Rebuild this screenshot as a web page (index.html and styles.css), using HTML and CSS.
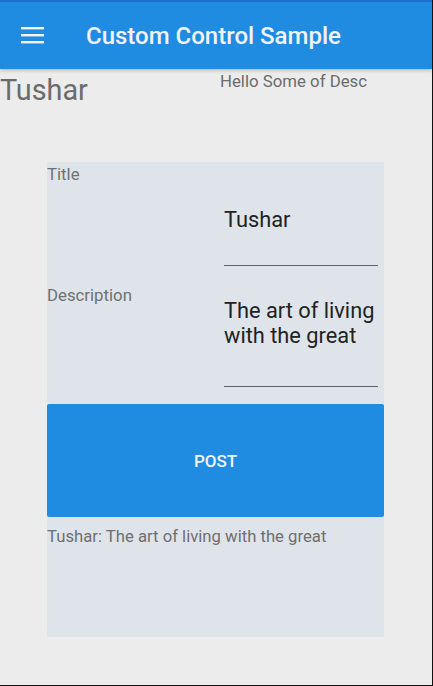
FILE: index.html
```html
<!DOCTYPE html>
<html>
<head>
<meta charset="utf-8">
<link rel="stylesheet" href="styles.css">
</head>
<body>
<div class="frame">
  <div class="status"></div>
  <header class="appbar">
    <span class="menu" aria-label="menu">
      <svg width="24" height="18" viewBox="0 0 24 18"><rect x="0" y="0" width="23" height="2.4" fill="#f3f3f3"/><rect x="0" y="7" width="23" height="2.4" fill="#f3f3f3"/><rect x="0" y="14" width="23" height="2.4" fill="#f3f3f3"/></svg>
    </span>
    <h1 class="apptitle">Custom Control Sample</h1>
  </header>
  <main class="content">
    <div class="toprow">
      <div class="big">Tushar</div>
      <div class="desc">Hello Some of Desc</div>
    </div>
    <section class="card">
      <div class="field">
        <div class="label">Title</div>
        <div class="input single">Tushar</div>
      </div>
      <div class="field second">
        <div class="label">Description</div>
        <div class="input multi">The art of living with the great</div>
      </div>
      <button class="post">POST</button>
      <div class="result">Tushar: The art of living with the great</div>
    </section>
  </main>
</div>
</body>
</html>
```

FILE: styles.css
```css
* { box-sizing: border-box; }
html, body { margin: 0; padding: 0; }
body {
  font-family: Roboto, "Noto Sans", sans-serif;
  background: #ececec;
}
.frame {
  width: 433px;
  height: 686px;
  border-right: 1px solid #111;
  border-bottom: 1px solid #111;
  background: #ececec;
  overflow: hidden;
}
.status {
  height: 2px;
  background: #1a70cc;
}
.appbar {
  height: 67px;
  background: #1f8ce2;
  display: flex;
  align-items: center;
  box-shadow: 0 2px 3px rgba(0,0,0,0.18);
  position: relative;
}
.menu {
  display: flex;
  margin-left: 21px;
  width: 24px;
}
.apptitle {
  margin: 0 0 0 41px;
  font-size: 24px;
  font-weight: 500;
  color: #f2f2f2;
}
.toprow {
  display: grid;
  grid-template-columns: 220px 1fr;
  height: 93px;
}
.big {
  font-size: 28.8px;
  color: #6b6b6b;
  padding-top: 4px;
  line-height: 34px;
}
.desc {
  font-size: 16.8px;
  color: #6b6b6b;
  padding-top: 2px;
  line-height: 20px;
}
.card {
  margin-left: 47px;
  width: 337px;
  height: 475px;
  background: #dfe4eb;
  display: flex;
  flex-direction: column;
}
.field {
  display: grid;
  grid-template-columns: 177px 154px;
}
.second {
  margin-top: 17px;
}
.label {
  font-size: 16.8px;
  color: #707070;
  line-height: 20px;
  padding-top: 2px;
}
.input {
  font-size: 21.8px;
  color: #222;
  border-bottom: 1px solid #5f6266;
  line-height: 25px;
  height: 104px;
}
.single {
  padding-top: 45px;
}
.multi {
  padding-top: 15px;
}
.post {
  margin-top: 17px;
  height: 113px;
  flex: none;
  border: none;
  border-radius: 2px;
  background: #1f8ce2;
  color: #f4f4f4;
  font-family: Roboto, "Noto Sans", sans-serif;
  font-size: 17px;
  font-weight: 500;
  padding: 0;
}
.result {
  margin-top: 10px;
  font-size: 16.7px;
  color: #6f6f6f;
  line-height: 20px;
}
```
